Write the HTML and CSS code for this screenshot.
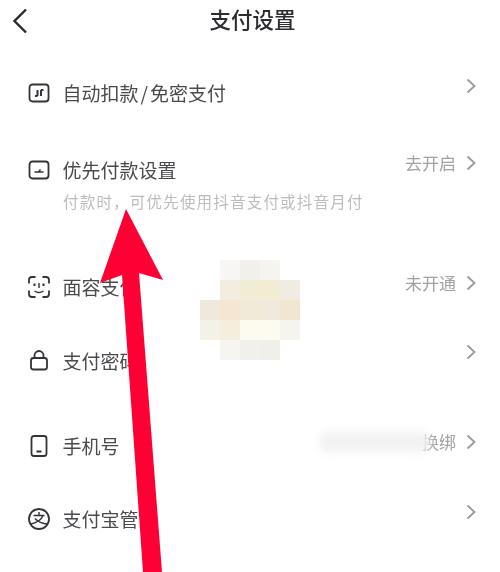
FILE: index.html
```html
<!DOCTYPE html>
<html lang="zh-CN">
<head>
<meta charset="utf-8">
<title>支付设置</title>
<link rel="stylesheet" href="styles.css">
</head>
<body>
<main class="screen">
  <header class="nav">
    <svg class="back" viewBox="0 0 16 26"><path d="M14 1.500 2.500 13 14 24.500"/></svg>
    <h1 class="title">支付设置</h1>
  </header>
  <section class="list">
    <div class="row row-auto">
      <svg class="icon" viewBox="0 0 22 22"><rect x="1.500" y="2.500" width="19" height="17" rx="3"/><path class="thick" d="M9.500 8v6M9.500 14H7M13 14V8M13 8h2.500"/></svg>
      <span class="label">自动扣款<span class="slash">/</span>免密支付</span>
      <div class="trail lift-7"><svg class="chev" viewBox="0 0 10 16"><path d="M1.500 1.500 8.500 8l-7 6.500"/></svg></div>
    </div>
    <div class="row row-first">
      <svg class="icon" viewBox="0 0 22 22"><rect x="1.500" y="2.500" width="19" height="17" rx="3"/><path class="thin" d="M6.500 13h9M10.500 13l2-2.500"/></svg>
      <span class="label">优先付款设置</span>
      <div class="trail lift-7"><span class="value">去开启</span><svg class="chev" viewBox="0 0 10 16"><path d="M1.500 1.500 8.500 8l-7 6.500"/></svg></div>
    </div>
    <p class="sub">付款时，可优先使用抖音支付或抖音月付</p>
    <div class="row row-face">
      <svg class="icon" viewBox="0 0 22 22"><path d="M1 7.500V4a3 3 0 0 1 3-3h3.500M14.500 1H18a3 3 0 0 1 3 3v3.500M1 14.500V18a3 3 0 0 0 3 3h3.500M14.500 21H18a3 3 0 0 0 3-3v-3.500"/><path class="thin" d="M6.500 15q4.500 3 9 0M11 7v5"/><path class="thick" d="M6.500 7.500v2.500M15.500 7.500v2.500"/></svg>
      <span class="label">面容支付</span>
      <div class="trail lift-4"><span class="value">未开通</span><svg class="chev" viewBox="0 0 10 16"><path d="M1.500 1.500 8.500 8l-7 6.500"/></svg></div>
    </div>
    <div class="row row-pass">
      <svg class="icon" viewBox="0 0 22 22"><rect x="3" y="8" width="16" height="11.500" rx="2.500"/><path d="M6.500 8V5.500a4.500 4.500 0 0 1 9 0V8"/></svg>
      <span class="label">支付密码</span>
      <div class="trail lift-9"><svg class="chev" viewBox="0 0 10 16"><path d="M1.500 1.500 8.500 8l-7 6.500"/></svg></div>
    </div>
    <div class="row row-phone">
      <svg class="icon" viewBox="0 0 22 22"><rect x="3.500" y="1" width="15" height="20" rx="2.500"/><path class="thick" d="M8.500 16.500h5"/></svg>
      <span class="label">手机号</span>
      <div class="trail lift-4"><span class="value">换绑</span><span class="smudge"></span><svg class="chev" viewBox="0 0 10 16"><path d="M1.500 1.500 8.500 8l-7 6.500"/></svg></div>
    </div>
    <div class="row row-ali">
      <svg class="icon" viewBox="0 0 22 22"><circle cx="11" cy="11" r="10"/><path class="thin" d="M5.500 7.500h11M11 4v3.500M15 7.500q-2.500 6.500-12 8.500M7 10.500q4.500 5 12.500 5.500"/></svg>
      <span class="label">支付宝管家</span>
      <div class="trail lift-7"><svg class="chev" viewBox="0 0 10 16"><path d="M1.500 1.500 8.500 8l-7 6.500"/></svg></div>
    </div>
  </section>
  <div class="mosaic" aria-hidden="true">
    <i class="gap"></i><i class="c1"></i><i class="c2"></i><i class="c3"></i><i class="gap"></i>
    <i class="gap"></i><i class="c4"></i><i class="c5"></i><i class="c6"></i><i class="c7"></i>
    <i class="c8"></i><i class="c9"></i><i class="c10"></i><i class="c11"></i><i class="c12"></i>
    <i class="c13"></i><i class="c14"></i><i class="c15"></i><i class="c15"></i><i class="c16"></i>
    <i class="gap"></i><i class="c17"></i><i class="c18"></i><i class="c19"></i><i class="gap"></i>
  </div>
  <svg class="arrow" viewBox="0 0 500 572" aria-hidden="true"><polygon points="126,209 163,280 139,273 162,572 143,572 122,275 100,283"/></svg>
</main>
</body>
</html>
```

FILE: styles.css
```css
* { box-sizing: border-box; }
html, body { margin: 0; padding: 0; background: #fff; }
.screen {
  position: relative;
  width: 500px;
  height: 572px;
  overflow: hidden;
  background: #fff;
  font-family: "Noto Sans CJK SC", "Noto Sans", sans-serif;
}
.nav {
  position: relative;
  height: 44px;
  display: flex;
  align-items: center;
  justify-content: center;
}
.back {
  position: absolute;
  left: 12px;
  top: 8px;
  width: 16px;
  height: 26px;
  fill: none;
  stroke: #2a2a2e;
  stroke-width: 2.400;
}
.title {
  margin: 0 0 7px 5px;
  font-size: 21.500px;
  font-weight: 500;
  line-height: 30px;
  color: #2c2c30;
  filter: blur(.3px);
}
.list { display: flex; flex-direction: column; padding: 0 24px 0 28px; }
.row { display: flex; align-items: center; height: 40px; }
.row-auto { margin-top: 29px; }
.row-first { margin-top: 37px; }
.row-face { margin-top: 55px; }
.row-pass { margin-top: 34px; }
.row-phone { margin-top: 45px; }
.row-ali { margin-top: 33px; }
.icon {
  flex: none;
  width: 22px;
  height: 22px;
  fill: none;
  stroke: #333338;
  stroke-width: 1.800;
  filter: blur(.3px);
}
.thick { stroke-width: 2; }
.thin { stroke-width: 1.400; }
.label {
  margin-left: 12.500px;
  font-size: 19px;
  line-height: 26px;
  color: #4a4a4e;
  white-space: nowrap;
  filter: blur(.35px);
}
.slash { margin: 0 2px; }
.trail {
  position: relative;
  margin-left: auto;
  display: flex;
  align-items: center;
  gap: 10px;
}
.lift-4 { margin-bottom: 8px; }
.lift-7 { margin-bottom: 14px; }
.lift-9 { margin-bottom: 18px; }
.value {
  font-size: 17px;
  line-height: 24px;
  color: #a2a2a4;
  filter: blur(.35px);
}
.chev {
  width: 10px;
  height: 16px;
  fill: none;
  stroke: #9a9a9c;
  stroke-width: 1.800;
}
.sub {
  margin: 0 0 0 35px;
  font-size: 15.500px;
  letter-spacing: 1.200px;
  line-height: 22px;
  color: #bcbcbe;
  white-space: nowrap;
  filter: blur(.35px);
}
.smudge {
  position: absolute;
  right: 46px;
  top: 2px;
  width: 110px;
  height: 20px;
  border-radius: 6px;
  background: #f2f2f2;
  filter: blur(4px);
}
.mosaic {
  position: absolute;
  left: 200px;
  top: 260px;
  display: grid;
  grid-template-columns: repeat(5, 20px);
  grid-auto-rows: 20px;
}
.gap { background: transparent; }
.c1 { background: #f7f6f4; } .c2 { background: #f1f0ea; } .c3 { background: #f5f4f0; }
.c4 { background: #f3ede0; } .c5 { background: #f1ecd4; } .c6 { background: #f1ecd2; } .c7 { background: #f0ece4; }
.c8 { background: #efe8dc; } .c9 { background: #f4e6d0; } .c10 { background: #f1ead9; } .c11 { background: #f1e9dc; } .c12 { background: #f1e6d2; }
.c13 { background: #f3f1e8; } .c14 { background: #f3efdc; } .c15 { background: #fdfbef; } .c16 { background: #f5f4ef; }
.c17 { background: #f6f5f2; } .c18 { background: #f1f0eb; } .c19 { background: #f1efe9; }
.arrow {
  position: absolute;
  inset: 0;
  width: 500px;
  height: 572px;
  fill: #fe0034;
}
```
